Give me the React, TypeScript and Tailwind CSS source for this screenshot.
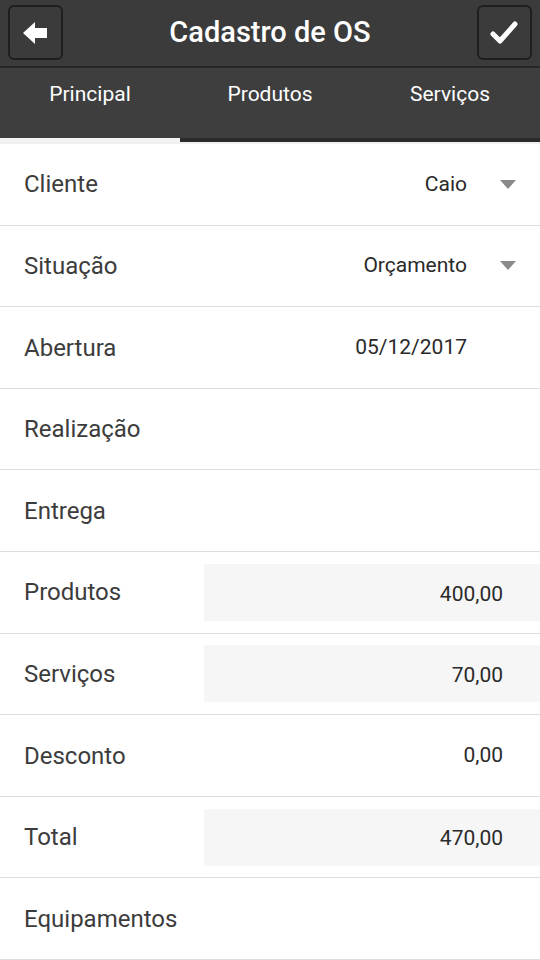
type Row = {
  label: string;
  value?: string;
  kind?: "select" | "text" | "box" | "plain";
};

const rows: Row[] = [
  { label: "Cliente", value: "Caio", kind: "select" },
  { label: "Situação", value: "Orçamento", kind: "select" },
  { label: "Abertura", value: "05/12/2017", kind: "text" },
  { label: "Realização" },
  { label: "Entrega" },
  { label: "Produtos", value: "400,00", kind: "box" },
  { label: "Serviços", value: "70,00", kind: "box" },
  { label: "Desconto", value: "0,00", kind: "plain" },
  { label: "Total", value: "470,00", kind: "box" },
  { label: "Equipamentos" },
];

function Caret() {
  return (
    <svg width="16" height="9" viewBox="0 0 16 9" className="ml-[33px] mr-[24px]">
      <path d="M0 0 H16 L8 9 Z" fill="#8a8a8a" />
    </svg>
  );
}

function FieldRow({ row }: { row: Row }) {
  return (
    <div className="flex h-[81.6px] items-center border-b border-[#dddddd] bg-white">
      <div className="pl-6 text-[24px] text-[#3c3c3c]">{row.label}</div>
      <div className="flex flex-1 items-center justify-end">
        {row.kind === "select" && (
          <>
            <span className="text-[21px] text-[#2a2a2a]">{row.value}</span>
            <Caret />
          </>
        )}
        {row.kind === "text" && (
          <span className="mr-[73px] text-[21px] text-[#2a2a2a]">{row.value}</span>
        )}
        {row.kind === "plain" && (
          <span className="mr-[37px] text-[21px] text-[#2a2a2a]">{row.value}</span>
        )}
        {row.kind === "box" && (
          <div className="ml-auto flex h-[57px] w-[336px] items-center justify-end bg-[#f6f6f6] pr-[37px] pt-[4px] text-[21px] text-[#2a2a2a]">
            {row.value}
          </div>
        )}
      </div>
    </div>
  );
}

export default function App() {
  return (
    <div
      className="flex h-[960px] w-[540px] flex-col overflow-hidden bg-white"
      style={{ fontFamily: "Roboto, 'Liberation Sans', sans-serif" }}
    >
      <header className="flex h-[66px] items-center justify-between bg-[#3b3b3b] px-2">
        <button className="flex h-[55px] w-[55px] items-center justify-center rounded-md border-2 border-[#1f1f1f]">
          <svg width="26" height="24" viewBox="0 0 26 24">
            <path d="M0 12 L12 1 V7 H24 V17 H12 V23 Z" fill="#ffffff" />
          </svg>
        </button>
        <h1 className="text-[29px] font-medium text-white">Cadastro de OS</h1>
        <button className="flex h-[55px] w-[55px] items-center justify-center rounded-md border-2 border-[#1f1f1f]">
          <svg width="28" height="24" viewBox="0 0 28 24">
            <path d="M3 13 L10 20 L25 3" fill="none" stroke="#ffffff" strokeWidth="5" strokeLinecap="round" strokeLinejoin="round" />
          </svg>
        </button>
      </header>
      <div className="h-[2px] bg-[#262626]" />
      <nav className="flex h-[75px] bg-[#3e3e3e]">
        {["Principal", "Produtos", "Serviços"].map((t, i) => (
          <div key={t} className="flex flex-1 flex-col">
            <div className="flex flex-1 items-start justify-center pt-[11px] text-[21px] text-white">
              {t}
            </div>
            <div className={i === 0 ? "h-[4px] bg-[#f4f4f4]" : "h-[4px] bg-[#2a2a2a]"} />
          </div>
        ))}
      </nav>
      <div className="h-[2px] bg-[#efefef]" />
      <main className="flex flex-col">
        {rows.map((r) => (
          <FieldRow key={r.label} row={r} />
        ))}
      </main>
    </div>
  );
}
